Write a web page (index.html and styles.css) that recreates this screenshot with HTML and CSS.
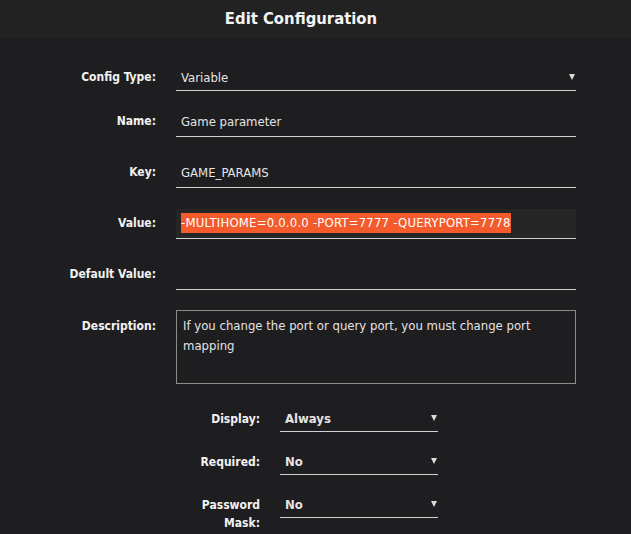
FILE: index.html
```html
<!DOCTYPE html>
<html lang="en">
<head>
  <meta charset="UTF-8">
  <title>Edit Configuration</title>
  <link rel="stylesheet" href="styles.css">
</head>
<body>
  <header class="title-bar">
    <h1>Edit Configuration</h1>
  </header>
  <main class="editor">
    <div class="form">
      <div class="row row-type">
        <label class="label label-select">Config Type:</label>
        <div class="select"><span>Variable</span><span class="caret"></span></div>
      </div>
      <div class="row">
        <label class="label">Name:</label>
        <div class="field">Game parameter</div>
      </div>
      <div class="row">
        <label class="label">Key:</label>
        <div class="field">GAME_PARAMS</div>
      </div>
      <div class="row">
        <label class="label">Value:</label>
        <div class="field field-focus"><span class="selected">-MULTIHOME=0.0.0.0 -PORT=7777 -QUERYPORT=7778</span></div>
      </div>
      <div class="row row-default">
        <label class="label">Default Value:</label>
        <div class="field"></div>
      </div>
      <div class="row row-area">
        <label class="label label-area">Description:</label>
        <div class="textarea">If you change the port or query port, you must change port mapping</div>
      </div>
    </div>

    <div class="options">
      <div class="opt-row">
        <label class="opt-label">Display:</label>
        <div class="select select-small"><span>Always</span><span class="caret"></span></div>
      </div>
      <div class="opt-row">
        <label class="opt-label">Required:</label>
        <div class="select select-small"><span>No</span><span class="caret"></span></div>
      </div>
      <div class="opt-row">
        <label class="opt-label">Password Mask:</label>
        <div class="select select-small"><span>No</span><span class="caret"></span></div>
      </div>
    </div>
  </main>
</body>
</html>
```

FILE: styles.css
```css
:root {
  --bg: #1e1d1f;
  --bar: #222222;
  --text: #e4e4e4;
  --label: #f2f2f2;
  --line: #d2d2d2;
  --accent: #f35b2c;
}
* { box-sizing: border-box; margin: 0; padding: 0; }
body {
  font-family: 'DejaVu Sans Condensed', 'DejaVu Sans', sans-serif;
  font-size: 13px;
  background: var(--bg);
  color: var(--text);
  min-height: 100vh;
}
.title-bar {
  background: var(--bar);
  height: 38px;
  padding-right: 29px;
  display: flex;
  justify-content: center;
  align-items: center;
}
.title-bar h1 {
  font-size: 16.5px;
  font-weight: 700;
  color: #f4f4f4;
  line-height: 38px;
}
.editor {
  padding-top: 27px;
}
.form {
  margin-left: 56px;
  width: 520px;
}
.row {
  display: grid;
  grid-template-columns: 100px 400px;
  column-gap: 20px;
  margin-bottom: 21px;
}
.row-type { margin-bottom: 16px; }
.row-default { margin-bottom: 20px; }
.row-area { margin-bottom: 22px; }
.label {
  font-weight: 700;
  font-size: 12px;
  color: var(--label);
  text-align: right;
  line-height: 29px;
}
.label-select { line-height: 25px; }
.label-area { line-height: 20px; padding-top: 6px; }
.field {
  height: 30px;
  line-height: 29px;
  padding: 0 5px;
  border-bottom: 1px solid var(--line);
  white-space: nowrap;
}
.field-focus {
  background: #262626;
}
.selected {
  display: inline-block;
  background: var(--accent);
  color: #fff;
  line-height: 20px;
  letter-spacing: 0.2px;
  vertical-align: 1px;
}
.textarea {
  height: 74px;
  border: 1px solid #8c8c8c;
  padding: 5px 6px;
  line-height: 20px;
}
.select {
  height: 26px;
  line-height: 25px;
  padding: 0 1px 0 5px;
  border-bottom: 1px solid var(--line);
  display: flex;
  justify-content: space-between;
}
.caret {
  align-self: flex-start;
  margin-top: 9px;
  width: 0;
  height: 0;
  border-left: 3px solid transparent;
  border-right: 3px solid transparent;
  border-top: 6px solid #dcdcdc;
}
.options {
  margin-left: 180px;
  width: 258px;
}
.opt-row {
  display: grid;
  grid-template-columns: 80px 158px;
  column-gap: 20px;
  margin-bottom: 17px;
}
.opt-label {
  font-weight: 700;
  font-size: 12px;
  color: var(--label);
  text-align: right;
  line-height: 18px;
  padding-top: 4px;
}
.select-small span:first-child {
  font-weight: 700;
}
```
